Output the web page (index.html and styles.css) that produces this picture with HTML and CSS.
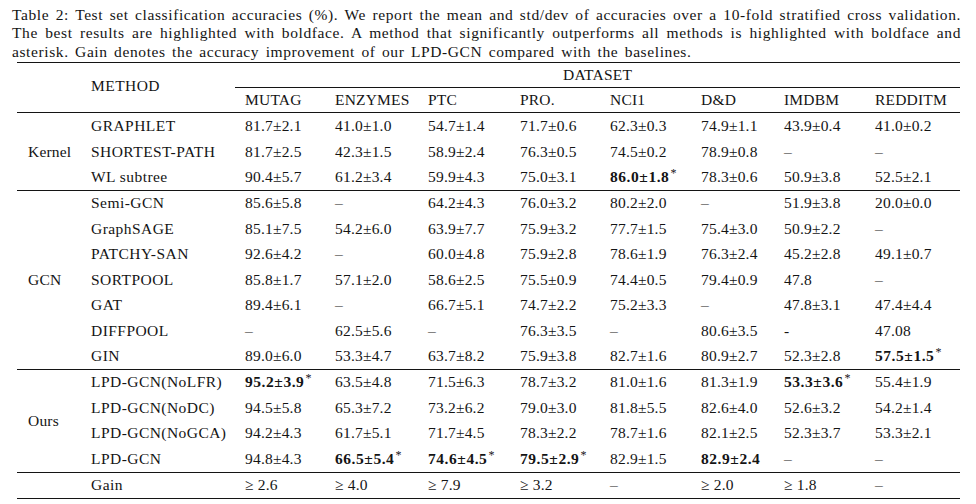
FILE: index.html
```html
<!DOCTYPE html>
<html>
<head>
<meta charset="utf-8">
<link rel="stylesheet" href="styles.css">
</head>
<body>
<div class="caption">
  <div class="cline just">Table 2: Test set classification accuracies (%). We report the mean and std/dev of accuracies over a 10-fold stratified cross validation.</div>
  <div class="cline just">The best results are highlighted with boldface. A method that significantly outperforms all methods is highlighted with boldface and</div>
  <div class="cline last">asterisk. Gain denotes the accuracy improvement of our LPD-GCN compared with the baselines.</div>
</div>
<table class="results">
  <colgroup>
    <col class="c-group"><col class="c-method">
    <col class="c-d1"><col class="c-d2"><col class="c-d3"><col class="c-d4">
    <col class="c-d5"><col class="c-d6"><col class="c-d7"><col class="c-d8">
  </colgroup>
  <thead>
    <tr class="toprule">
      <th class="grp"></th>
      <th class="method" rowspan="2">METHOD</th>
      <th class="dataset" colspan="8"><div class="cmid">DATASET</div></th>
    </tr>
    <tr class="hdr">
      <th class="grp"></th>
      <th class="first">MUTAG</th><th>ENZYMES</th><th>PTC</th><th>PRO.</th><th>NCI1</th><th>D&amp;D</th><th>IMDBM</th><th>REDDITM</th>
    </tr>
  </thead>
  <tbody class="sect">
    <tr><td class="grp" rowspan="3">Kernel</td><td class="name">GRAPHLET</td><td class="first">81.7±2.1</td><td>41.0±1.0</td><td>54.7±1.4</td><td>71.7±0.6</td><td>62.3±0.3</td><td>74.9±1.1</td><td>43.9±0.4</td><td>41.0±0.2</td></tr>
    <tr><td class="name">SHORTEST-PATH</td><td class="first">81.7±2.5</td><td>42.3±1.5</td><td>58.9±2.4</td><td>76.3±0.5</td><td>74.5±0.2</td><td>78.9±0.8</td><td>–</td><td>–</td></tr>
    <tr><td class="name">WL subtree</td><td class="first">90.4±5.7</td><td>61.2±3.4</td><td>59.9±4.3</td><td>75.0±3.1</td><td><b>86.0±1.8</b><sup>*</sup></td><td>78.3±0.6</td><td>50.9±3.8</td><td>52.5±2.1</td></tr>
  </tbody>
  <tbody class="sect">
    <tr><td class="grp" rowspan="7">GCN</td><td class="name">Semi-GCN</td><td class="first">85.6±5.8</td><td>–</td><td>64.2±4.3</td><td>76.0±3.2</td><td>80.2±2.0</td><td>–</td><td>51.9±3.8</td><td>20.0±0.0</td></tr>
    <tr><td class="name">GraphSAGE</td><td class="first">85.1±7.5</td><td>54.2±6.0</td><td>63.9±7.7</td><td>75.9±3.2</td><td>77.7±1.5</td><td>75.4±3.0</td><td>50.9±2.2</td><td>–</td></tr>
    <tr><td class="name">PATCHY-SAN</td><td class="first">92.6±4.2</td><td>–</td><td>60.0±4.8</td><td>75.9±2.8</td><td>78.6±1.9</td><td>76.3±2.4</td><td>45.2±2.8</td><td>49.1±0.7</td></tr>
    <tr><td class="name">SORTPOOL</td><td class="first">85.8±1.7</td><td>57.1±2.0</td><td>58.6±2.5</td><td>75.5±0.9</td><td>74.4±0.5</td><td>79.4±0.9</td><td>47.8</td><td>–</td></tr>
    <tr><td class="name">GAT</td><td class="first">89.4±6.1</td><td>–</td><td>66.7±5.1</td><td>74.7±2.2</td><td>75.2±3.3</td><td>–</td><td>47.8±3.1</td><td>47.4±4.4</td></tr>
    <tr><td class="name">DIFFPOOL</td><td class="first">–</td><td>62.5±5.6</td><td>–</td><td>76.3±3.5</td><td>–</td><td>80.6±3.5</td><td>-</td><td>47.08</td></tr>
    <tr><td class="name">GIN</td><td class="first">89.0±6.0</td><td>53.3±4.7</td><td>63.7±8.2</td><td>75.9±3.8</td><td>82.7±1.6</td><td>80.9±2.7</td><td>52.3±2.8</td><td><b>57.5±1.5</b><sup>*</sup></td></tr>
  </tbody>
  <tbody class="sect">
    <tr><td class="grp" rowspan="4">Ours</td><td class="name">LPD-GCN(NoLFR)</td><td class="first"><b>95.2±3.9</b><sup>*</sup></td><td>63.5±4.8</td><td>71.5±6.3</td><td>78.7±3.2</td><td>81.0±1.6</td><td>81.3±1.9</td><td><b>53.3±3.6</b><sup>*</sup></td><td>55.4±1.9</td></tr>
    <tr><td class="name">LPD-GCN(NoDC)</td><td class="first">94.5±5.8</td><td>65.3±7.2</td><td>73.2±6.2</td><td>79.0±3.0</td><td>81.8±5.5</td><td>82.6±4.0</td><td>52.6±3.2</td><td>54.2±1.4</td></tr>
    <tr><td class="name">LPD-GCN(NoGCA)</td><td class="first">94.2±4.3</td><td>61.7±5.1</td><td>71.7±4.5</td><td>78.3±2.2</td><td>78.7±1.6</td><td>82.1±2.5</td><td>52.3±3.7</td><td>53.3±2.1</td></tr>
    <tr><td class="name">LPD-GCN</td><td class="first">94.8±4.3</td><td><b>66.5±5.4</b><sup>*</sup></td><td><b>74.6±4.5</b><sup>*</sup></td><td><b>79.5±2.9</b><sup>*</sup></td><td>82.9±1.5</td><td><b>82.9±2.4</b></td><td>–</td><td>–</td></tr>
  </tbody>
  <tbody class="sect last">
    <tr><td class="grp"></td><td class="name">Gain</td><td class="first">≥ 2.6</td><td>≥ 4.0</td><td>≥ 7.9</td><td>≥ 3.2</td><td>–</td><td>≥ 2.0</td><td>≥ 1.8</td><td>–</td></tr>
  </tbody>
</table>
</body>
</html>
```

FILE: styles.css
```css
html, body {
  margin: 0;
  padding: 0;
  background: #ffffff;
}
body {
  color: #141414;
  font-family: "Liberation Serif", "Times New Roman", serif;
  padding: 6px 15px 0 12px;
}
.caption {
  font-size: 15.5px;
  line-height: 18.3px;
  letter-spacing: 0.6px;
  width: 949px;
}
.cline {
  white-space: nowrap;
}
.cline.just {
  white-space: normal;
  text-align: justify;
  text-align-last: justify;
}
.cline.last {
  word-spacing: 2px;
}
.results {
  margin-left: 5px;
  margin-top: 1px;
  width: 943px;
  border-collapse: collapse;
  table-layout: fixed;
  font-size: 15.5px;
  letter-spacing: 0.2px;
}
.c-group { width: 68px; }
.c-method { width: 150px; }
.c-d1 { width: 95px; }
.c-d2 { width: 93px; }
.c-d3 { width: 92px; }
.c-d4 { width: 90px; }
.c-d5 { width: 91px; }
.c-d6 { width: 83px; }
.c-d7 { width: 91px; }
.c-d8 { width: 90px; }
.results th, .results td {
  font-weight: normal;
  text-align: left;
  padding: 0 0 0 5px;
  height: 25.45px;
  line-height: 18px;
  white-space: nowrap;
  vertical-align: middle;
}
.results td.grp, .results th.grp {
  padding-left: 11px;
}
.results td.name, .results th.method {
  padding-left: 6px;
  letter-spacing: 0.45px;
}
.results .first {
  padding-left: 10px;
}
.results th.method {
  vertical-align: top;
  padding-top: 14px;
}
.results th.dataset {
  text-align: center;
  padding: 0;
  height: 25px;
}
.cmid {
  border-bottom: 1px solid #141414;
  height: 24.5px;
  line-height: 24px;
}
.toprule {
  border-top: 1.5px solid #141414;
}
.hdr th {
  height: 24px;
}
.sect {
  border-top: 1px solid #141414;
}
.sect.last {
  border-bottom: 1.5px solid #141414;
}
.results b {
  font-weight: bold;
  letter-spacing: 0.55px;
}
.results sup {
  font-size: 12px;
  line-height: 0;
  vertical-align: 5px;
  margin-left: 1px;
}
```
